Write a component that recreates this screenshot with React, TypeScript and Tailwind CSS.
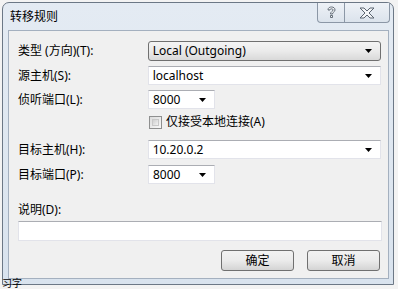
import React from 'react';

const font = { fontFamily: '"Noto Sans", "Noto Sans CJK SC", sans-serif' };

function Arrow() {
    return (
        <svg width="7" height="4" viewBox="0 0 7 4" className="shrink-0">
            <path d="M0 0H7L3.5 4Z" fill="#000" />
        </svg>
    );
}

function Combo({ value, width, list }: { value: string; width: string; list?: boolean }) {
    if (list) {
        return (
            <div className={`${width} h-[20px] flex items-center justify-between pl-[4px] pr-[8px] rounded-[3px] border border-[#707070] bg-gradient-to-b from-[#f4f4f4] via-[#ebebeb] to-[#d9d9d9]`}>
                <span className="text-[12px] text-black leading-none">{value}</span>
                <Arrow />
            </div>
        );
    }
    return (
        <div className={`${width} h-[19px] flex items-center justify-between pl-[4px] pr-[8px] bg-white border border-[#e2e3ea] border-t-[#abadb3]`}>
            <span className="text-[12px] text-black leading-none">{value}</span>
            <Arrow />
        </div>
    );
}

function Row({ label, children }: { label: string; children: React.ReactNode }) {
    return (
        <div className="flex items-center">
            <span className="w-[130px] text-[12px] text-black leading-none">{label}</span>
            {children}
        </div>
    );
}

function Button({ text }: { text: string }) {
    return (
        <div className="w-[73px] h-[21px] flex items-center justify-center rounded-[3px] border border-[#707070] bg-gradient-to-b from-[#f2f2f2] via-[#ebebeb] to-[#d4d4d4] text-[12px] text-black">
            {text}
        </div>
    );
}

export default function App() {
    return (
        <div className="w-[398px] h-[289px] bg-[#f3f3f3] overflow-hidden relative" style={font}>
            <div className="ml-[2px] mt-[2px] w-[392px] h-[283px] rounded-t-[7px] border border-[#6c7886] bg-gradient-to-b from-[#e4ebf3] to-[#d9e3ee] flex flex-col">
                {/* title bar */}
                <div className="h-[27px] flex items-start">
                    <span className="pl-[7px] pt-[5px] text-[12px] text-black">转移规则</span>
                    <div className="ml-auto mr-[3px] flex h-[20px] rounded-b-[4px] border border-t-0 border-[#8b97a6] bg-gradient-to-b from-[#eef2f7] to-[#dbe3ec] overflow-hidden">
                        <div className="w-[27px] flex items-center justify-center border-r border-[#8b97a6]">
                            <svg width="9" height="13" viewBox="0 0 9 13">
                                <path d="M1 4C1 1.5 3 1 4.5 1C6.5 1 8 2 8 4C8 6 5.5 6 5.5 8H3.5C3.5 5.5 6 5.5 6 4C6 3 5.3 2.8 4.5 2.8C3.5 2.8 3 3.3 3 4Z M3.5 9.5H5.5V11.5H3.5Z" fill="#f4f6f8" stroke="#56606c" strokeWidth="0.9" strokeLinejoin="round" />
                            </svg>
                        </div>
                        <div className="w-[44px] flex items-center justify-center">
                            <svg width="16" height="12" viewBox="0 0 16 12">
                                <path d="M1 1H5L8 4L11 1H15L10 6L15 11H11L8 8L5 11H1L6 6Z" fill="#f4f6f8" stroke="#5a6470" strokeWidth="1" strokeLinejoin="round" />
                            </svg>
                        </div>
                    </div>
                </div>
                {/* client area */}
                <div className="mx-[5px] w-[381px] h-[249px] border border-[#a4b0bf] bg-[#f0f0f0] pl-[9px] pr-[7px] pt-[10px] flex flex-col">
                    <Row label="类型 (方向)(T):">
                        <Combo value="Local (Outgoing)" width="w-[234px]" list />
                    </Row>
                    <div className="mt-[5px]">
                        <Row label="源主机(S):">
                            <Combo value="localhost" width="w-[234px]" />
                        </Row>
                    </div>
                    <div className="mt-[5px]">
                        <Row label="侦听端口(L):">
                            <Combo value="8000" width="w-[67px]" />
                        </Row>
                    </div>
                    <div className="mt-[6px] ml-[131px] flex items-center gap-[4px] h-[14px]">
                        <div className="w-[13px] h-[13px] border border-[#8e8f8f] bg-gradient-to-br from-[#dcdcdc] to-[#f8f8f8] p-[2px]">
                            <div className="w-full h-full border border-[#c8c8c8] bg-gradient-to-br from-[#cfcfcf] to-[#f2f2f2]" />
                        </div>
                        <span className="text-[12px] text-black leading-none">仅接受本地连接(A)</span>
                    </div>
                    <div className="mt-[11px]">
                        <Row label="目标主机(H):">
                            <Combo value="10.20.0.2" width="w-[234px]" />
                        </Row>
                    </div>
                    <div className="mt-[6px]">
                        <Row label="目标端口(P):">
                            <Combo value="8000" width="w-[67px]" />
                        </Row>
                    </div>
                    <span className="mt-[20px] text-[12px] text-black leading-none">说明(D):</span>
                    <div className="mt-[5px] w-[364px] h-[20px] bg-white border border-[#e2e3ea] border-t-[#abadb3]" />
                    <div className="mt-[9px] flex justify-end gap-[13px] pr-[1px]">
                        <Button text="确定" />
                        <Button text="取消" />
                    </div>
                </div>
            </div>
            <span className="absolute left-[2px] top-[278px] text-[10px] text-black leading-none">习字</span>
        </div>
    );
}
